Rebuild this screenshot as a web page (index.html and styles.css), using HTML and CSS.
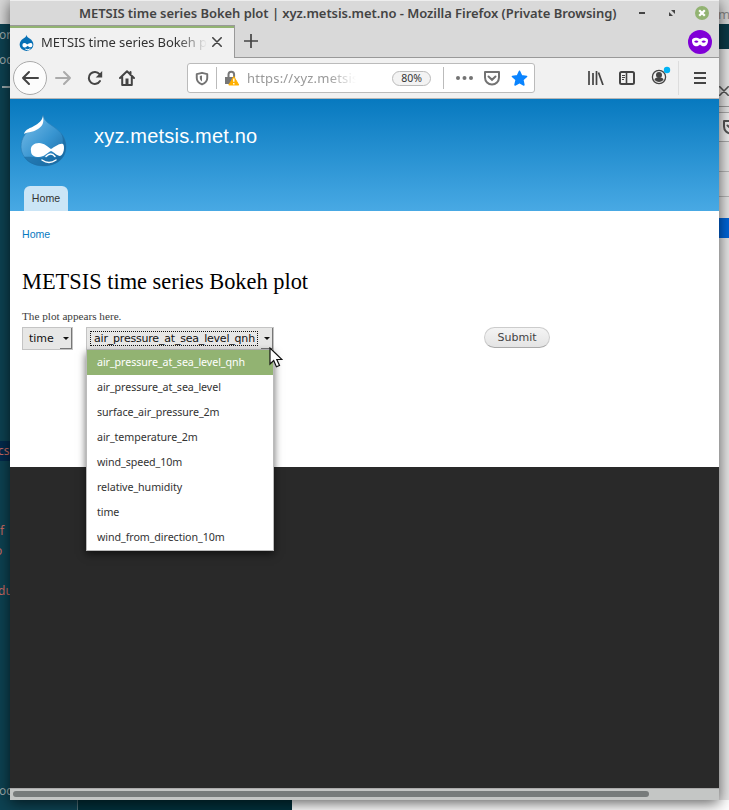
FILE: index.html
```html
<!DOCTYPE html>
<html lang="en">
<head>
<meta charset="utf-8">
<title>METSIS time series Bokeh plot | xyz.metsis.met.no</title>
<link rel="stylesheet" href="styles.css">
</head>
<body>
<svg class="defs" width="0" height="0">
  <defs>
    <linearGradient id="drop" x1="0" y1="0" x2="1" y2="1"><stop offset="0" stop-color="#7ec1eb"/><stop offset=".55" stop-color="#3794d0"/><stop offset="1" stop-color="#17659f"/></linearGradient>
    <symbol id="shield" viewBox="0 0 16 16"><path d="M8 1.500 14 3v4.500c0 3.400-2.300 6-6 7.300-3.700-1.300-6-3.900-6-7.300V3Z" fill="none" stroke="currentColor" stroke-width="2.200" stroke-linejoin="round"/><path d="M8 4.500v6.800C6.500 10.500 5.500 9 5.500 7.300V5Z" fill="currentColor"/></symbol>
    <symbol id="pocket" viewBox="0 0 18 16"><path d="M2 2h14v5.500a7 7 0 0 1-14 0Z" fill="none" stroke="currentColor" stroke-width="2" stroke-linejoin="round"/><path d="m5.500 6.500 3.500 3.300 3.500-3.300" fill="none" stroke="currentColor" stroke-width="2" stroke-linecap="round"/></symbol>
    <symbol id="cross" viewBox="0 0 10 10"><path d="m.8.8 8.400 8.400M9.200.8.8 9.200" stroke="currentColor" stroke-width="1.600" stroke-linecap="round"/></symbol>
    <symbol id="close-cross" viewBox="0 0 10 10"><path d="m1.500 1.500 7 7M8.500 1.500l-7 7" stroke="currentColor" stroke-width="2.800"/></symbol>
  </defs>
</svg>
<main class="desktop">
  <aside class="left">
    <div class="left-top"></div>
    <pre class="code">or
oc</pre><span class="dash"></span>
    <span class="chosen">cs</span>
    <span class="red r1">f</span><span class="red r2">o</span><span class="red r3">du</span><span class="grey">oc</span>
  </aside>

  <section class="window">
    <header class="titlebar">
      <span class="window-title">METSIS time series Bokeh plot | xyz.metsis.met.no - Mozilla Firefox (Private Browsing)</span>
      <span class="minimize"></span>
      <svg class="restore" width="8" height="8" viewBox="0 0 8 8"><path d="M3 1h4v4ZM1 3v4h4Z" fill="#444"/></svg>
      <span class="close"><svg width="8" height="8"><use href="#close-cross"/></svg></span>
    </header>
    <nav class="tabs">
      <div class="tab">
        <svg class="favicon" width="15" height="17" viewBox="0 0 48 54"><path d="M24 2c1 7 6 9 11 13 6 4 11 10 11 19a22 20 0 0 1-44 0c0-9 5-15 11-19C18 11 23 9 24 2Z" fill="#0770b5"/><path d="M11 36c0-9 8-9 15-3 6-4 16-9 17 2 0 9-9 9-15 2-7 8-17 8-17-1Z" fill="#fff"/><path d="M20 48q9 5 16-1" stroke="#fff" stroke-width="3" fill="none"/></svg>
        <span class="tab-title">METSIS time series Bokeh p</span>
        <svg class="tab-close" width="10" height="10"><use href="#cross"/></svg>
      </div>
      <svg class="plus" width="14" height="14" viewBox="0 0 14 14"><path d="M7 0v14M0 7h14" stroke="#444" stroke-width="1.700"/></svg>
      <svg class="mask" width="24" height="24" viewBox="0 0 24 24"><circle cx="12" cy="12" r="12" fill="#8000d7"/><path d="M4 10.500c0-3.500 5-3.500 8-1.500 3-2 8-2 8 1.500 0 6.500-5.500 7-8 4-2.500 3-8 2.500-8-4Z" fill="#fff"/><path d="M6 11.800q2.500-2.800 4.500 0-2 2-4.500 0ZM13.500 11.800q2-2.800 4.500 0-2.500 2-4.500 0Z" fill="#8000d7"/></svg>
    </nav>
    <div class="toolbar">
      <span class="back"><svg width="18" height="16" viewBox="0 0 18 16"><path d="M17 8H2m6-6L2 8l6 6" fill="none" stroke="#444" stroke-width="2" stroke-linecap="round" stroke-linejoin="round"/></svg></span>
      <svg class="forward" width="18" height="16" viewBox="0 0 18 16"><path d="M2 8h14m-6-6 6 6-6 6" fill="none" stroke="#aaa" stroke-width="2" stroke-linecap="round" stroke-linejoin="round"/></svg>
      <svg class="reload" width="16" height="16" viewBox="0 0 16 16"><path d="M12.500 4.200A6 6 0 1 0 13 11" fill="none" stroke="#444" stroke-width="2" stroke-linecap="round"/><path d="M15.200 1v6.500H8.700Z" fill="#444"/></svg>
      <svg class="home" width="16" height="16" viewBox="0 0 16 16"><path d="m1 8 7-6.700L15 8M3.200 7v8h9.600V7M11.500 2v3" fill="none" stroke="#444" stroke-width="2" stroke-linecap="round" stroke-linejoin="round"/><path d="M6.500 8.500h3V14h-3Z" fill="#444"/></svg>
      <div class="urlbar">
        <svg class="u-shield" width="14" height="15"><use href="#shield"/></svg>
        <span class="rule"></span>
        <svg class="lock" width="16" height="16" viewBox="0 0 16 16"><path d="M4.500 8V4.500a2.800 2.800 0 0 1 5.600 0V8" fill="none" stroke="#777" stroke-width="2"/><path d="M1 7h9v7H1Z" fill="#777"/><path d="m9.800 6.500 5 8.500h-10Z" fill="#ffb000" stroke="#ffb000" stroke-linejoin="round"/><path d="M9.800 8.500v3.300m0 1.200v1.500" stroke="#fff" stroke-width="1.400"/></svg>
        <span class="url">https://xyz.metsis.</span>
        <span class="percent">80%</span>
        <span class="rule"></span>
        <svg class="dots" width="17" height="4" viewBox="0 0 17 4"><g fill="#737373"><circle cx="2" cy="2" r="2"/><circle cx="8.500" cy="2" r="2"/><circle cx="15" cy="2" r="2"/></g></svg>
        <svg class="pocket" width="18" height="16"><use href="#pocket"/></svg>
        <svg class="star" width="17" height="17" viewBox="0 0 17 17"><path d="m8.500 1.300 2.100 4.500 5 .6-3.700 3.400 1 5.200-4.400-2.500L4 15l1.100-5.200L1.400 6.400l5-.6Z" fill="#0a84ff" stroke="#0a84ff" stroke-width="1.500" stroke-linejoin="round"/></svg>
      </div>
      <svg class="library" width="16" height="14" viewBox="0 0 16 14"><path d="M1 0v14M5 2v12M8.500 0v14M10.500 1.500 15 14" stroke="#444" stroke-width="1.700"/></svg>
      <svg class="sidebar" width="16" height="14" viewBox="0 0 16 14"><rect x="1" y="1" width="14" height="12" rx="1.500" fill="none" stroke="#444" stroke-width="2"/><path d="M7.500 1v12" stroke="#444" stroke-width="1.600"/><path d="M3 4.500h3M3 6.500h3M3 8.500h2" stroke="#444"/></svg>
      <svg class="account" width="20" height="20" viewBox="0 0 20 20"><circle cx="8" cy="11" r="6.600" fill="none" stroke="#444" stroke-width="1.300"/><circle cx="8" cy="9" r="3" fill="#444"/><path d="M3.500 14c0-2 2-2.500 4.500-2.500s4.500.5 4.500 2.500Q8 18 3.500 14Z" fill="#444"/><circle cx="16" cy="4" r="3.200" fill="#00b3f4"/></svg>
      <span class="menu-divider"></span>
      <svg class="menu" width="12" height="12" viewBox="0 0 12 12"><path d="M0 1h12M0 6h12M0 11h12" stroke="#444" stroke-width="1.900"/></svg>
    </div>

    <article class="page">
      <header class="site-header">
        <div class="brand">
          <svg class="logo" width="48" height="54" viewBox="0 0 48 54"><path d="M23 2c1 6 6 8.500 11 12 6 4.500 12 10 12 20 0 12-11 19-22.500 19S1 45 1 34C1 24 7 18 13 14 18 11 23 8 23 2Z" fill="url(#drop)" stroke="#2b80b8" stroke-width=".7"/><path d="M41 20c4 8 2 17-9 22-11 5-19 1-28 2 4 6 11 9 19 9 13 0 23-7 23-19 0-6-2-10-5-14Z" fill="#17689f" opacity=".65"/><path d="M23 3c1 6 0 10-5 13-6 4-12 3-14 5 1-5 7-6 10-8 5-3 8-5 9-10Z" fill="#fff"/><path d="M11 38c-1-5 3-8 8-8 5 0 9 4 12 6 4-2 8-6 12-5 2 2 1 11-3 12-3 0-6-4-9-5-4 2-7 6-12 6-5 0-8-2-8-6Z" fill="#fff"/><path d="M26 43.500q5-5 9 0M22 47q7 5 14 0" fill="none" stroke="#fff" stroke-width="1.500" stroke-linecap="round"/></svg>
          <span class="site-name">xyz.metsis.met.no</span>
        </div>
        <a class="main-tab">Home</a>
      </header>
      <div class="body">
        <a class="crumb">Home</a>
        <h1>METSIS time series Bokeh plot</h1>
        <p>The plot appears here.</p>
        <div class="form">
          <div class="select short"><span class="select-label">time</span><span class="arrow"></span></div>
          <div class="select long"><span class="select-label focus">air_pressure_at_sea_level_qnh</span><span class="arrow"></span>
            <ul class="options">
              <li class="selected">air_pressure_at_sea_level_qnh</li>
              <li>air_pressure_at_sea_level</li>
              <li>surface_air_pressure_2m</li>
              <li>air_temperature_2m</li>
              <li>wind_speed_10m</li>
              <li>relative_humidity</li>
              <li>time</li>
              <li>wind_from_direction_10m</li>
            </ul>
            <svg class="cursor" width="14" height="22" viewBox="0 0 14 22"><path d="M1 1v16l3.700-3.500 2.700 6.300 3.100-1.300-2.700-6H13Z" fill="#fff" stroke="#111" stroke-width="1.200"/></svg>
          </div>
          <span class="submit">Submit</span>
        </div>
      </div>
      <footer class="site-footer"></footer>
    </article>
    <div class="scrollbar"><span class="thumb"></span></div>
  </section>

  <aside class="right">
    <div class="r-title">m</div>
    <div class="r-teal"></div>
    <div class="r-tab"><svg width="10" height="10"><use href="#cross"/></svg></div>
    <div class="r-tool"><svg width="18" height="16"><use href="#pocket"/></svg></div>
    <div class="r-row"></div><div class="r-row second"></div>
    <div class="r-blue"></div>
  </aside>
  <div class="bottom"><span class="b1"></span><span class="b2"></span><span class="b3"></span></div>
</main>
</body>
</html>
```
FILE: styles.css
```css
* { box-sizing: border-box; }
body { margin: 0; overflow: hidden; font-family: "Noto Sans", sans-serif; color: #333; }
svg { display: block; flex: none; }
.defs { position: absolute; }
.desktop { width: 729px; height: 810px; display: grid; grid-template: 800px 10px / 10px 709px 10px; overflow: hidden; }

.left { position: relative; overflow: hidden; background: #0d4252; font-size: 12px; color: #9aa9ac; }
.left-top { height: 24px; background: #d8d8d8; }
.code { margin: -2px 0 0 -1px; font: 12px/25px "Noto Sans", sans-serif; }
.dash { display: block; width: 8px; height: 2px; margin: 14px 0 0 2px; background: #9aa9ac; }
.chosen { position: absolute; top: 441px; left: 0; width: 10px; height: 20px; background: #032a4c; color: #c96a62; line-height: 20px; text-indent: -2px; }
.red, .grey { position: absolute; left: 0; line-height: 20px; color: #c96a62; }
.r1 { top: 521px; }
.r2 { top: 541px; left: -5px; }
.r3 { top: 581px; left: -2px; }
.grey { top: 781px; left: -1px; color: #9aa9ac; }

.window { position: relative; z-index: 1; width: 709px; height: 800px; background: #f1f1f1; box-shadow: 0 3px 14px rgba(0,0,0,.65); }
.titlebar { height: 25px; display: flex; align-items: center; background: #d9d9d9; border-top: 1px solid #eee; }
.window-title { width: 538px; margin-left: 69px; font-size: 13px; font-weight: 600; letter-spacing: -.05px; white-space: nowrap; color: #444; line-height: 22px; }
.minimize { width: 6px; height: 2px; background: #444; margin-left: 22px; }
.restore { margin-left: 23px; }
.close { width: 14px; height: 14px; border-radius: 50%; background: #92b372; color: #fff; margin: -1px 0 0 19px; display: grid; place-items: center; }

.tabs { height: 33px; display: flex; align-items: flex-start; background: #d9d9d9; box-shadow: inset 0 -1px #999; }
.tab { width: 225px; height: 33px; display: flex; align-items: center; padding: 1px 12px 0 9px; background: #f1f1f1; border-top: 1px solid #999; border-right: 1px solid #999; box-shadow: inset 0 2px #92b372; }
.favicon { margin-top: -1px; }
.tab-title { width: 166px; margin: -2px 0 0 7px; font-size: 13px; letter-spacing: -.1px; white-space: nowrap; overflow: hidden; -webkit-mask-image: linear-gradient(90deg, #000 82%, transparent); mask-image: linear-gradient(90deg, #000 82%, transparent); }
.tab-close { margin: -1px 0 0 5px; color: #444; }
.plus { margin: 9px 0 0 9px; }
.mask { margin: 5px 7px 0 auto; }

.toolbar { height: 41px; display: flex; align-items: center; border-bottom: 1px solid #b6b6b6; }
.back { width: 34px; height: 34px; margin-left: 3px; border: 1px solid #aaa; border-radius: 50%; background: #fcfcfc; display: grid; place-items: center; }
.forward { margin-left: 7px; }
.reload { margin-left: 15px; }
.home { margin-left: 16px; }
.urlbar { width: 348px; height: 30px; margin-left: 52px; border: 1px solid #bbb; border-radius: 3px; background: #fff; display: flex; align-items: center; color: #737373; }
.u-shield { margin-left: 7px; }
.rule { width: 1px; height: 22px; margin-left: 7px; background: #bbb; }
.lock { margin-left: 7px; }
.url { width: 109px; margin-left: 7px; font-size: 13px; letter-spacing: .2px; color: #999; white-space: nowrap; overflow: hidden; -webkit-mask-image: linear-gradient(90deg, #000 75%, transparent); mask-image: linear-gradient(90deg, #000 75%, transparent); }
.percent { width: 39px; height: 15px; margin-left: 36px; border: 1px solid #bbb; border-radius: 8px; background: #f3f3f3; font-size: 10.500px; line-height: 13px; text-align: center; color: #333; }
.percent + .rule { margin-left: 12px; }
.dots { margin-left: 12px; }
.pocket { margin-left: 10px; }
.star { margin-left: 10px; }
.library { margin-left: 53px; }
.sidebar { margin-left: 15px; }
.account { margin: -4px 0 0 16px; }
.menu-divider { width: 1px; height: 34px; margin-left: 7px; background: #ddd; }
.menu { margin-left: 15px; }

.page { height: 689px; background: #fff; }
.site-header { height: 112px; background: linear-gradient(#0779bf, #48a9e4); display: flex; flex-direction: column; justify-content: space-between; }
.brand { display: flex; padding: 14px 0 0 10px; }
.site-name { margin: 10px 0 0 26px; font: 20px/26px "Liberation Sans", sans-serif; letter-spacing: .2px; color: #fff; }
.main-tab { width: 44px; height: 25px; margin-left: 14px; border-radius: 6px 6px 0 0; background: #cbe5f6; font: 10.600px/25px "Liberation Sans", sans-serif; text-align: center; color: #333; }
.body { height: 256px; padding: 16px 12px 0; }
.crumb { display: block; font: 10.600px/15px "Liberation Sans", sans-serif; color: #0779bf; }
h1 { margin: 26px 0 0; font: 22.400px/28px "Liberation Serif", serif; color: #000; }
p { margin: 13px 0 0; font: 11.200px/14px "Liberation Serif", serif; color: #3b3b3b; }
.form { display: flex; align-items: flex-start; margin-top: 4px; }
.select { position: relative; height: 23px; display: flex; align-items: center; border: 1px solid #c4c4c4; background: #e7e7e6; color: #111; font: 11px/15px "DejaVu Sans", sans-serif; }
.short { width: 51px; padding-left: 6px; }
.long { width: 188px; margin-left: 13px; padding-left: 3px; }
.select-label { white-space: nowrap; }
.focus { width: 168px; padding-left: 4px; outline: 1px dotted #111; outline-offset: -1px; letter-spacing: -.2px; }
.arrow { width: 12px; height: 21px; margin-left: auto; border-right: 1px solid #777; border-bottom: 1px solid #777; display: grid; place-items: center; }
.arrow::after { content: ""; border: 3px solid transparent; border-top: 3px solid #111; border-bottom: 0; }
.options { position: absolute; z-index: 2; left: -1px; top: 22px; width: 188px; height: 201px; margin: 0; padding: 0; list-style: none; border: solid #bbb; border-width: 0 1px 1px; background: #fff; box-shadow: 0 3px 8px rgba(0,0,0,.6); font: 10.700px/25px "Noto Sans", sans-serif; letter-spacing: -.08px; color: #333; }
.options li { height: 25px; padding-left: 10px; white-space: nowrap; }
.options .selected { background: #92b372; color: #fff; }
.cursor { position: absolute; z-index: 3; left: 182px; top: 19px; }
.submit { width: 66px; height: 21px; margin-left: 210px; border: 1px solid #ccc; border-bottom-color: #aaa; border-radius: 11px; background: linear-gradient(#f4f4f4, #e4e4e4); font: 11px/19px "DejaVu Sans", sans-serif; text-align: center; color: #444; }
.site-footer { height: 321px; background: #292929; }
.scrollbar { height: 12px; padding: 2px 3px; background: #c4c6c5; border-top: 1px solid #aaa; }
.thumb { display: block; width: 636px; height: 6px; border-radius: 3px; background: #777b7b; }

.right { overflow: hidden; background: #e6e6e6; color: #555; }
.r-title { height: 24px; background: #d8d8d8; font-size: 13px; line-height: 28px; color: #888; text-indent: -1px; }
.r-teal { height: 25px; background: #0b3a47; }
.r-tab { height: 58px; padding-top: 37px; border-bottom: 1px solid #999; }
.r-tool { height: 30px; margin-top: 5px; padding: 6px 0 0 3px; border: solid #aaa; border-width: 1px 0; background: #eee; }
.r-row { height: 30px; border-bottom: 1px solid #b5b5b5; }
.r-row.second { height: 25px; }
.r-blue { height: 20px; margin-top: 21px; background: #0065d8; }
.bottom { grid-column: 1 / 4; display: flex; background: #ddd; }
.b1 { width: 78px; background: #0d4252; border-right: 1px solid #527078; }
.b2 { width: 214px; background: #00303b; }
.b3 { flex: 1; background: #fff; }
```
